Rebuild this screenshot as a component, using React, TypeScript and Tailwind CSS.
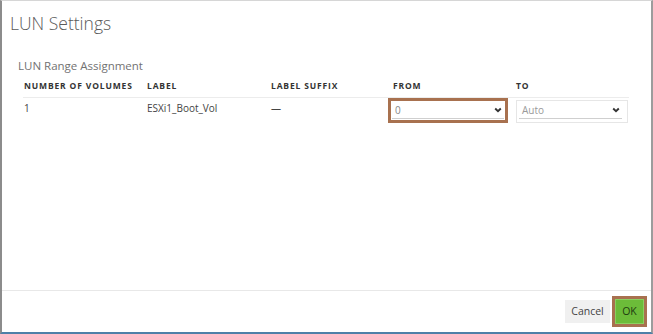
import { ReactNode } from "react";

function Chevron() {
  return (
    <svg width="8" height="6" viewBox="0 0 8 6" className="shrink-0">
      <path d="M1.2 1.5 L4 4.2 L6.8 1.5" fill="none" stroke="#333" strokeWidth="1.9" />
    </svg>
  );
}

function SelectBox({ value, muted }: { value: string; muted?: boolean }) {
  return (
    <div className="flex items-center h-[17px] border-b border-[#cfcfcf] pl-[3px] pr-[2px]">
      <span className={`flex-1 text-[10px] ${muted ? "text-[#9a9a9a]" : "text-[#888]"}`}>{value}</span>
      <Chevron />
    </div>
  );
}

function Th({ children }: { children: ReactNode }) {
  return (
    <div className="text-[8.5px] font-bold tracking-[0.1em] text-[#333] uppercase leading-none">
      {children}
    </div>
  );
}

export default function App() {
  return (
    <div
      className="w-[653px] h-[334px] bg-white flex flex-col border-l-2 border-l-[#8c8c8c] border-r-2 border-r-[#9c9c9c] border-t border-t-[#d6d6d6] border-b-2 border-b-[#4f80a8]"
      style={{ fontFamily: '"Open Sans", sans-serif' }}
    >
      <div className="flex-1">
        {/* Title */}
        <h1 className="pl-[8px] pt-[9px] text-[17.5px] leading-[26px] text-[#5a5a5a] font-light">LUN Settings</h1>

        {/* Section */}
        <div className="pl-[16px] pt-[22px] text-[11.5px] leading-[16px] text-[#727272]">
          LUN Range Assignment
        </div>

        <div className="ml-[21px] w-[606px] mt-[2px]">
          <div className="grid grid-cols-[123px_124px_122px_123px_112px] pl-[1px] h-[22px] items-center border-b border-[#ececec]">
            <Th>Number of volumes</Th>
            <Th>Label</Th>
            <Th>Label suffix</Th>
            <Th>From</Th>
            <Th>To</Th>
          </div>
          <div className="grid grid-cols-[123px_124px_122px_123px_112px] pl-[1px] text-[10px] leading-[15px] text-[#444]">
            <div className="pt-[3px]">1</div>
            <div className="pt-[3px]">ESXi1_Boot_Vol</div>
            <div className="pt-[3px]">—</div>
            <div>
              <div className="-ml-[5px] w-[120px] h-[25px] border-[3px] border-[#a8714f] px-[1px] pt-[1px]">
                <SelectBox value="0" />
              </div>
            </div>
            <div className="pt-[2px]">
              <div className="w-[112px] h-[23px] border border-[#e6e6e6] pl-[2px] pr-[5px] pt-[1px]">
                <SelectBox value="Auto" muted />
              </div>
            </div>
          </div>
        </div>
      </div>

      {/* Footer */}
      <div className="h-[42px] border-t border-[#e8e8e8] flex items-center justify-end gap-[2px] pr-[4px]">
        <button className="w-[45px] h-[23px] bg-[#f0f0f0] text-[10.5px] text-[#444]">Cancel</button>
        <div className="w-[35px] h-[31px] border-[3px] border-[#a8714f] flex">
          <button className="flex-1 bg-[#6cbc39] text-[10.5px] text-[#1f3d10] border border-[#8ad060]">OK</button>
        </div>
      </div>
    </div>
  );
}
